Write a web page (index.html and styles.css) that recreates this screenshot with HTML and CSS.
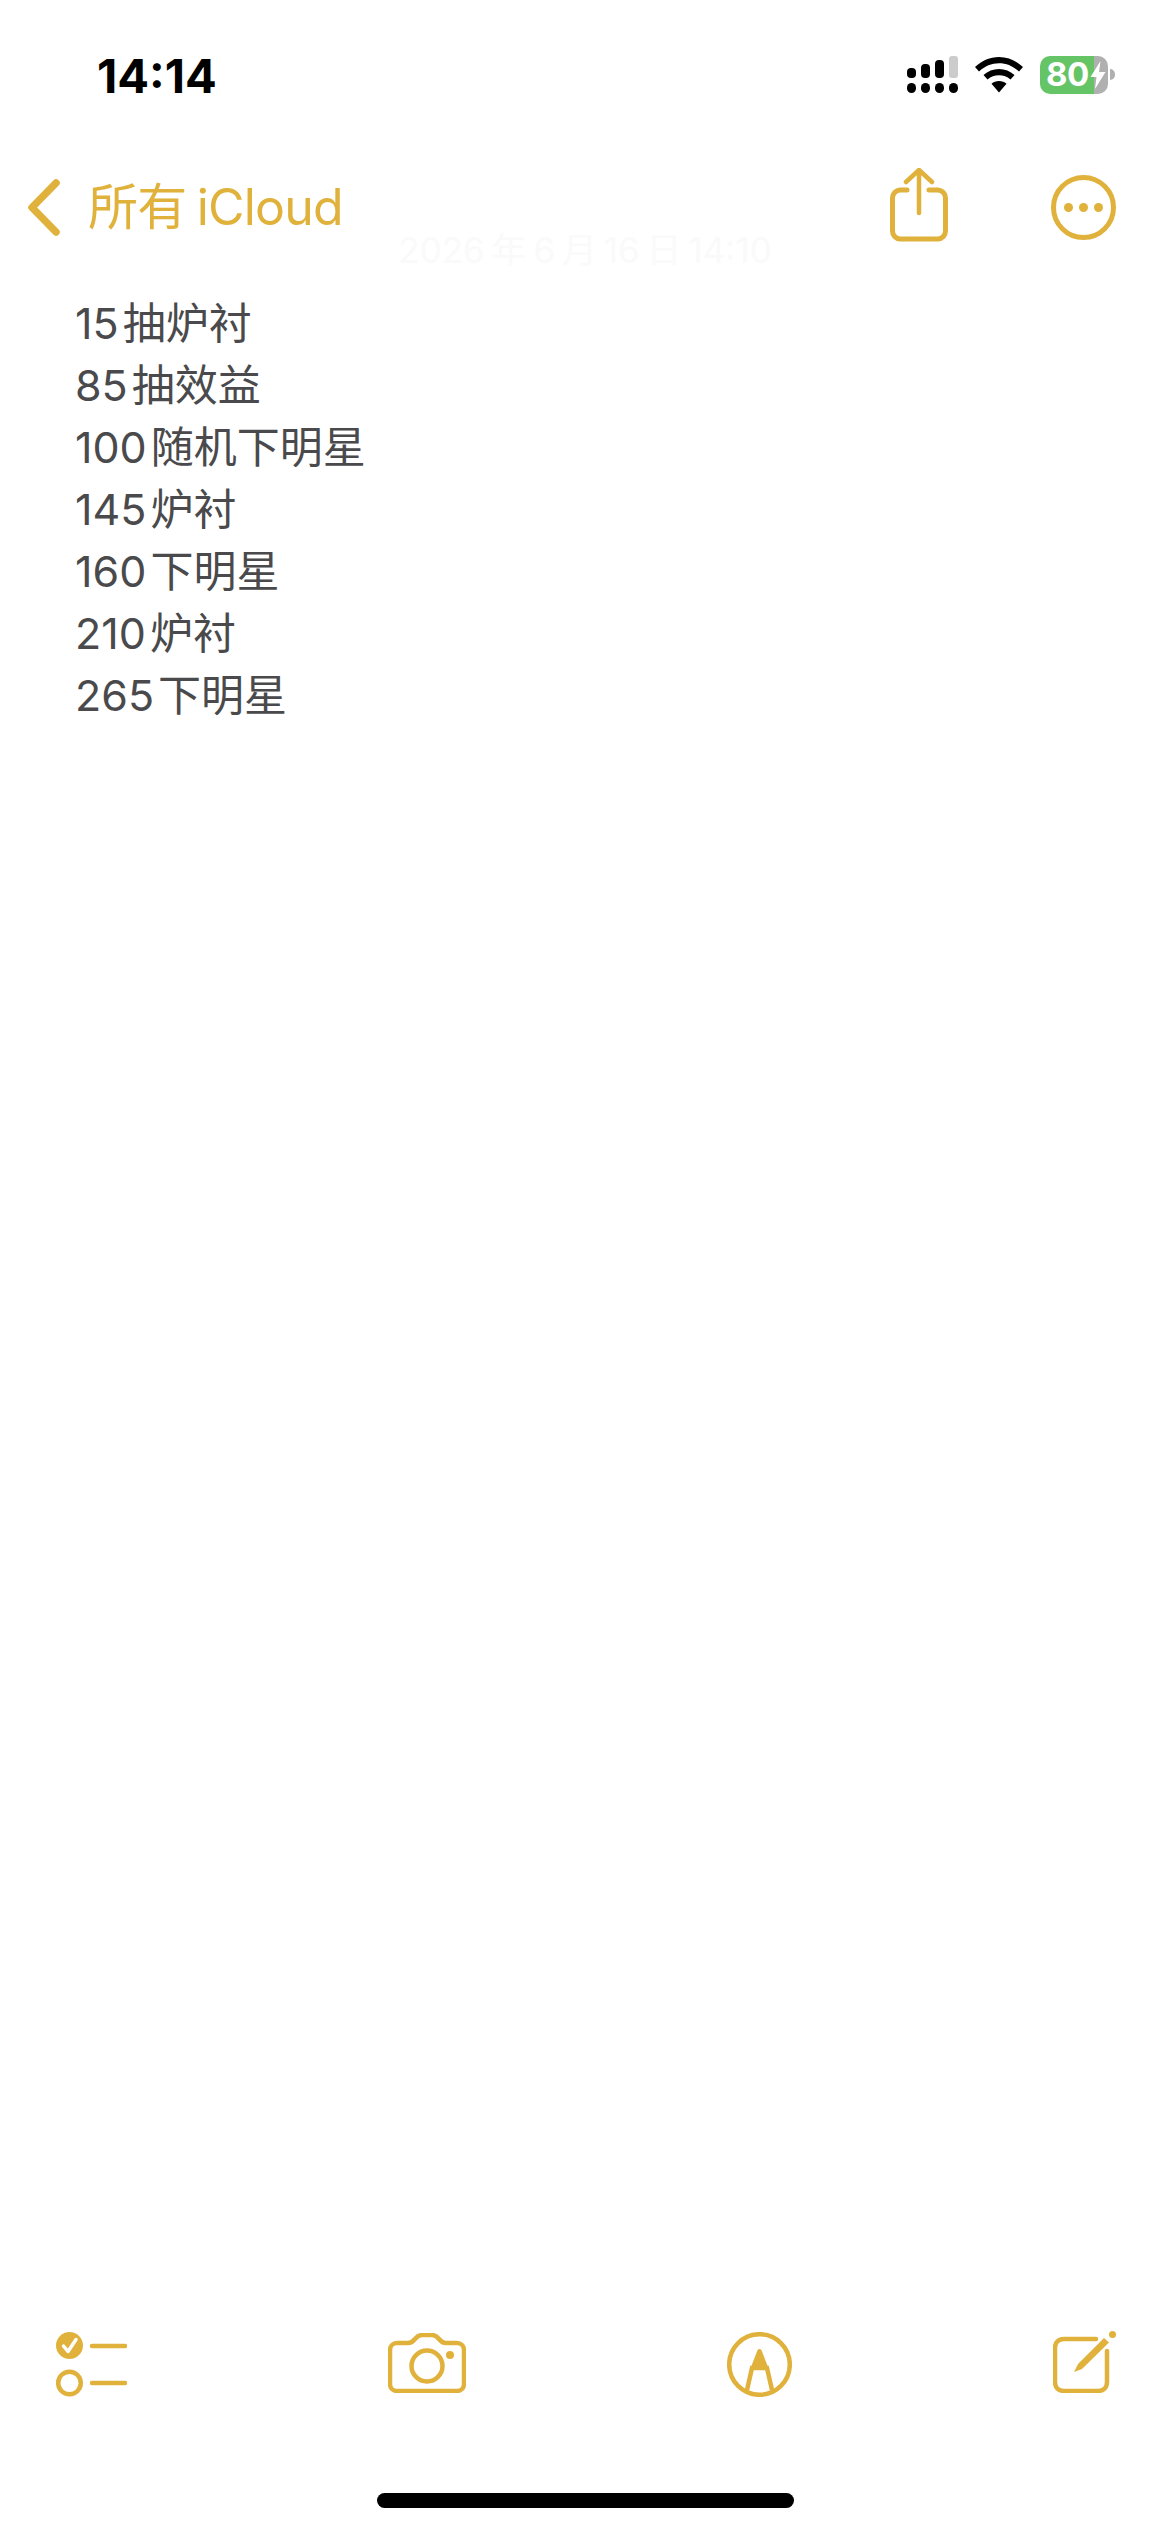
FILE: index.html
```html
<!DOCTYPE html>
<html lang="zh">
<head>
<meta charset="utf-8">
<title>备忘录</title>
<link rel="stylesheet" href="styles.css">
</head>
<body>
<div class="screen">
  <header class="status">
    <span class="time">14:14</span>
    <div class="status-icons">
      <svg class="signal" width="51" height="37" viewBox="0 0 51 37">
        <rect x="0" y="12" width="9" height="10" rx="4" fill="#000"/>
        <rect x="14" y="8" width="9" height="14" rx="4" fill="#000"/>
        <rect x="28" y="4" width="9" height="18" rx="4" fill="#000"/>
        <rect x="42" y="0" width="9" height="22" rx="3" fill="#ccc"/>
        <rect x="0" y="27" width="9" height="10" rx="4.500" fill="#000"/>
        <rect x="14" y="27" width="9" height="10" rx="4.500" fill="#000"/>
        <rect x="28" y="27" width="9" height="10" rx="4.500" fill="#000"/>
        <rect x="42" y="27" width="9" height="10" rx="4.500" fill="#000"/>
      </svg>
      <svg class="wifi" width="48" height="36" viewBox="0 0 48 36">
        <path d="M24 0C15 0 7 3.500 0 10L4 14.500C10 9 16.500 6.200 24 6.200S38 9 44 14.500L48 10C41 3.500 33 0 24 0Z" fill="#000"/>
        <path d="M24 12C18 12 13 14 8.500 18L12.500 22.500C16 19.500 19.500 18.200 24 18.200S32 19.500 35.500 22.500L39.500 18C35 14 30 12 24 12Z" fill="#000"/>
        <path d="M24 24C21 24 18.500 25 16.500 26.800L24 35.500L31.500 26.800C29.500 25 27 24 24 24Z" fill="#000"/>
      </svg>
      <div class="battery">
        <div class="battery-body">
          <span class="battery-num">80</span>
          <svg class="bolt" width="16" height="28" viewBox="0 0 15 28">
            <path d="M10 0L0 16H6L4.500 28L15 11H8.500Z" fill="#fff"/>
          </svg>
        </div>
        <span class="battery-nub"></span>
      </div>
    </div>
  </header>

  <nav class="nav">
    <a class="back">
      <svg width="34" height="59" viewBox="0 0 34 59">
        <path d="M29 5L5 29.500L29 54" fill="none" stroke="#e0b23c" stroke-width="7.500" stroke-linecap="round" stroke-linejoin="round"/>
      </svg>
      <span class="back-label">所有 iCloud</span>
    </a>
    <div class="nav-actions">
      <svg class="share" width="58" height="74" viewBox="0 0 58 74">
        <path d="M17 22H10A8 8 0 0 0 2.500 30V63A8 8 0 0 0 10 71H48A8 8 0 0 0 55.500 63V30A8 8 0 0 0 48 22H39" fill="none" stroke="#e0b23c" stroke-width="5" stroke-linecap="round"/>
        <path d="M29 45V3M16 14L29 2L42 14" fill="none" stroke="#e0b23c" stroke-width="4.500" stroke-linecap="round" stroke-linejoin="round"/>
      </svg>
      <svg width="65" height="65" viewBox="0 0 65 65">
        <circle cx="32.500" cy="32.500" r="30" fill="none" stroke="#e0b23c" stroke-width="5"/>
        <circle cx="17.500" cy="32.500" r="4.500" fill="#e0b23c"/>
        <circle cx="32.500" cy="32.500" r="4.500" fill="#e0b23c"/>
        <circle cx="47.500" cy="32.500" r="4.500" fill="#e0b23c"/>
      </svg>
    </div>
  </nav>

  <p class="date">2026 年 6 月 16 日 14:10</p>

  <main class="note">
    <p class="line">15 抽炉衬</p>
    <p class="line">85 抽效益</p>
    <p class="line">100 随机下明星</p>
    <p class="line">145 炉衬</p>
    <p class="line">160 下明星</p>
    <p class="line">210 炉衬</p>
    <p class="line">265 下明星</p>
  </main>

  <footer class="toolbar">
    <svg width="71" height="65" viewBox="0 0 71 65">
      <circle cx="13.500" cy="13.500" r="13.500" fill="#e0b23c"/>
      <path d="M7.500 14L12 19.500L20 7.500" fill="none" stroke="#fff" stroke-width="3.500" stroke-linecap="round" stroke-linejoin="round"/>
      <circle cx="13.500" cy="51" r="11.300" fill="none" stroke="#e0b23c" stroke-width="4.500"/>
      <path d="M36 14H69M36 51H69" fill="none" stroke="#e0b23c" stroke-width="4.500" stroke-linecap="round"/>
    </svg>
    <svg class="camera" width="78" height="60" viewBox="0 0 78 60">
      <path d="M9 10H20C23 10 25 8.500 27 6C29 3.500 31 2 34 2H44C47 2 49 3.500 51 6C53 8.500 55 10 58 10H69C73 10 76 13 76 17V51C76 55 73 58 69 58H9C5 58 2 55 2 51V17C2 13 5 10 9 10Z" fill="none" stroke="#e0b23c" stroke-width="4.500"/>
      <circle cx="39" cy="33" r="15.500" fill="none" stroke="#e0b23c" stroke-width="4.500"/>
      <circle cx="62" cy="22" r="4" fill="#e0b23c"/>
    </svg>
    <svg width="65" height="65" viewBox="0 0 65 65">
      <circle cx="32.500" cy="32.500" r="30.300" fill="none" stroke="#e0b23c" stroke-width="4.500"/>
      <path d="M32.500 17C34 17 34.500 18 35 19.500L41 35H24L30 19.500C30.500 18 31 17 32.500 17Z" fill="#e0b23c"/>
      <path d="M20 58L25 36H40L45 58" fill="none" stroke="#e0b23c" stroke-width="4.500"/>
    </svg>
    <svg class="compose" width="63" height="62" viewBox="0 0 63 62">
      <path d="M43 8H11C5.500 8 2 11.500 2 17V51C2 56.500 5.500 60 11 60H45C50.500 60 54 56.500 54 51V20" fill="none" stroke="#e0b23c" stroke-width="4.500" stroke-linecap="round"/>
      <path d="M21 41L25 33L51 7L56 11.500L29 38Z" fill="#e0b23c"/>
      <circle cx="59.500" cy="3.500" r="3.500" fill="#e0b23c"/>
    </svg>
  </footer>
  <div class="home-row"><span class="home-bar"></span></div>
</div>
</body>
</html>
```

FILE: styles.css
```css
* { box-sizing: border-box; }
html, body { margin: 0; padding: 0; background: #fff; }
body { font-family: Inter, "Noto Sans CJK SC", sans-serif; }
p { margin: 0; }

.screen {
  width: 1170px;
  height: 2532px;
  display: flex;
  flex-direction: column;
  overflow: hidden;
}

.status {
  height: 150px;
  flex: none;
  display: flex;
  align-items: center;
  justify-content: space-between;
  padding: 0 55px 0 97px;
}
.time {
  font-size: 47px;
  font-weight: 700;
  line-height: 1;
  color: #000;
}
.status-icons {
  display: flex;
  align-items: center;
  gap: 17px;
  margin-top: -1px;
}
.signal, .wifi { display: block; flex: none; }

.battery { display: flex; align-items: center; gap: 2px; }
.battery-body {
  width: 68px;
  height: 38px;
  border-radius: 10px;
  background: linear-gradient(to right, #65c466 0, #65c466 54px, #b0b0b0 54px);
  display: flex;
  align-items: center;
  padding-left: 6px;
}
.battery-num {
  font-size: 33px;
  font-weight: 700;
  line-height: 1;
  color: #fff;
  letter-spacing: -0.5px;
}
.bolt { flex: none; margin-left: 1px; }
.battery-nub {
  width: 5px;
  height: 11px;
  background: #b0b0b0;
  border-radius: 0 5px 5px 0;
}

.nav {
  height: 114px;
  flex: none;
  display: flex;
  align-items: center;
  justify-content: space-between;
  padding: 0 54px 0 27px;
}
.back { display: flex; align-items: center; gap: 27px; }
.back-label {
  font-size: 50px;
  line-height: 1;
  letter-spacing: -0.8px;
  word-spacing: -3px;
  color: #e0b23c;
}
.nav-actions { display: flex; align-items: center; gap: 103px; }
.share { margin-top: -5px; }

.date {
  margin-top: -34px;
  height: 40px;
  line-height: 40px;
  font-size: 35px;
  word-spacing: -3px;
  text-align: center;
  color: #fafafa;
}

.note { padding: 22px 0 0 75px; flex: 1; }
.line {
  height: 62px;
  line-height: 62px;
  font-size: 43px;
  word-spacing: -8px;
  color: #4a4a4c;
}

.toolbar {
  flex: none;
  display: flex;
  justify-content: space-between;
  align-items: flex-start;
  padding: 0 54px 0 56px;
}
.toolbar svg { display: block; flex: none; }
.toolbar .camera { margin-top: 1px; }
.toolbar .compose { margin-top: -1px; }

.home-row {
  flex: none;
  height: 135px;
  padding-top: 96px;
  display: flex;
  justify-content: center;
}
.home-bar {
  width: 417px;
  height: 15px;
  border-radius: 8px;
  background: #000;
}
```
